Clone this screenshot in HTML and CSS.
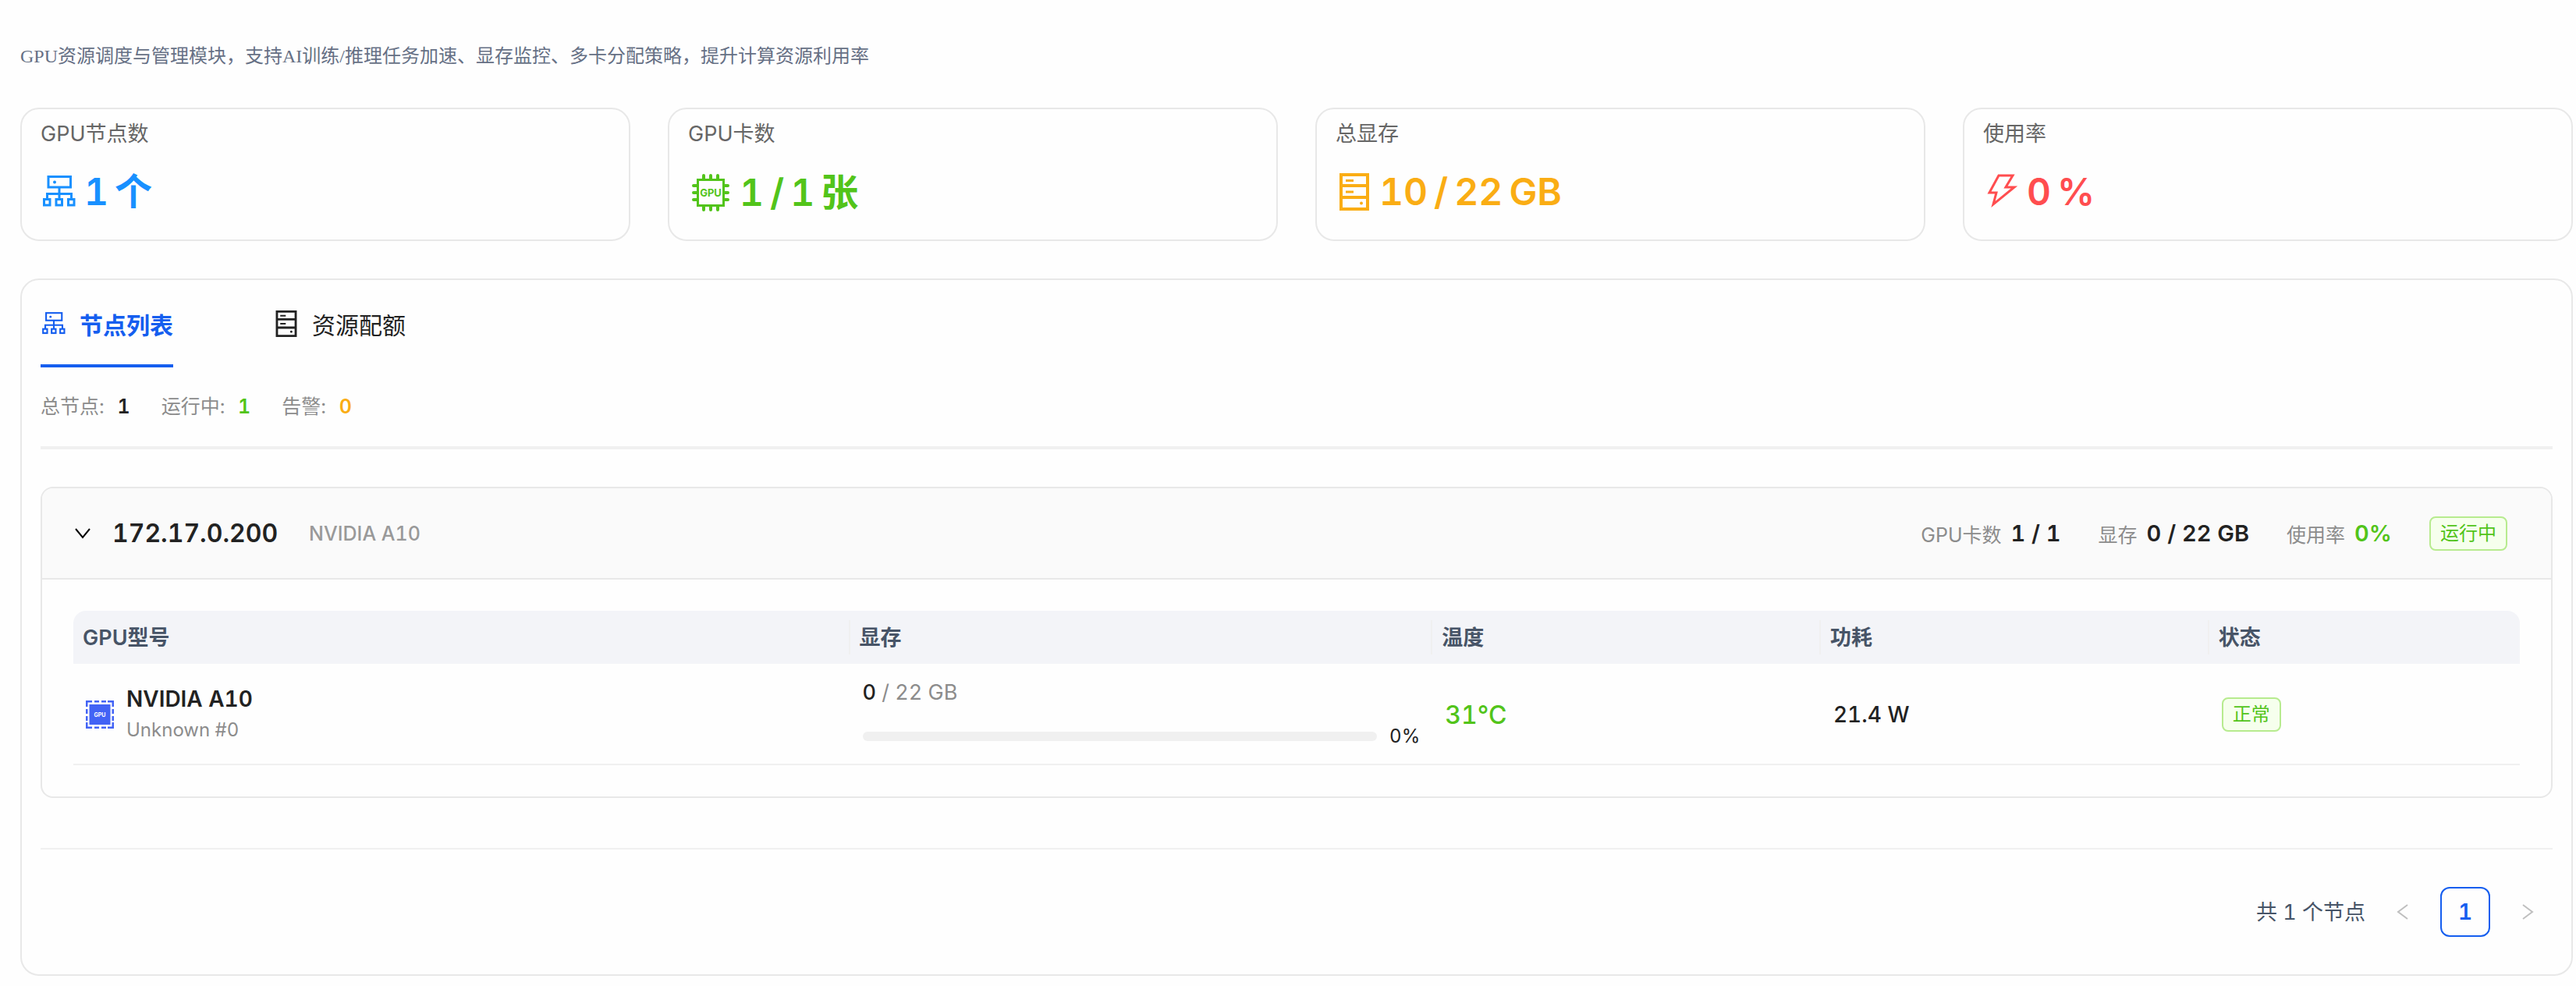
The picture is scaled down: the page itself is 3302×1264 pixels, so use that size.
FILE: index.html
```html
<!DOCTYPE html>
<html lang="zh-CN">
<head>
    <meta charset="UTF-8">
    <meta name="viewport" content="width=device-width, initial-scale=1.0">
    <title>GPU资源管理</title>
    <link rel="stylesheet" href="styles.css">
</head>
<body>

    <!-- shared icons -->
    <svg class="sprite" aria-hidden="true">
        <symbol id="icon-node" viewBox="0 0 48 48">
            <g fill="none" stroke="currentColor" stroke-width="3">
                <rect x="10" y="4.5" width="28.5" height="13.5"/>
                <path d="M24 18v15M8.5 33v-6.5h31V33"/>
                <rect x="4.5" y="33.5" width="7.5" height="7.5"/>
                <rect x="20" y="33.5" width="7.5" height="7.5"/>
                <rect x="35.5" y="33.5" width="7.5" height="7.5"/>
            </g>
            <circle cx="18" cy="11.5" r="2" fill="currentColor"/>
        </symbol>
        <symbol id="icon-server" viewBox="0 0 48 48">
            <g fill="none" stroke="currentColor">
                <path d="M7 2h34v44H7zM7 16h34M7 31h34" stroke-width="4"/>
                <path d="M13 9.5h10M13 24h10" stroke-width="3"/>
            </g>
            <circle cx="33" cy="38.5" r="2" fill="currentColor"/>
        </symbol>
    </svg>

    <p class="desc">GPU资源调度与管理模块，支持AI训练/推理任务加速、显存监控、多卡分配策略，提升计算资源利用率</p>

    <div class="cards">
        <div class="card">
            <div class="card-title">GPU节点数</div>
            <div class="card-value blue">
                <svg class="icon-lg"><use href="#icon-node"/></svg>
                <span>1</span>
                <span>个</span>
            </div>
        </div>
        <div class="card">
            <div class="card-title">GPU卡数</div>
            <div class="card-value green">
                <svg class="icon-chip" viewBox="0 0 58 58">
                    <rect x="12.5" y="12.5" width="33" height="33" fill="none" stroke="currentColor" stroke-width="3"/>
                    <path d="M20 11V7M29 11V7M38 11V7M20 47v4M29 47v4M38 47v4M11 20H7M11 29H7M11 38H7M47 20h4M47 29h4M47 38h4" stroke="currentColor" stroke-width="4" stroke-linecap="round"/>
                    <text x="29" y="34" text-anchor="middle" class="chip-text">GPU</text>
                </svg>
                <span>1</span>
                <span>/</span>
                <span>1</span>
                <span>张</span>
            </div>
        </div>
        <div class="card">
            <div class="card-title">总显存</div>
            <div class="card-value orange">
                <svg class="icon-lg"><use href="#icon-server"/></svg>
                <span>10</span>
                <span>/</span>
                <span>22</span>
                <span>GB</span>
            </div>
        </div>
        <div class="card">
            <div class="card-title">使用率</div>
            <div class="card-value red">
                <svg class="icon-lg" viewBox="0 0 48 48">
                    <path d="M20 3h18L29 18h11L13 40l4-15H8z" fill="none" stroke="currentColor" stroke-width="3"/>
                </svg>
                <span>0</span>
                <span>%</span>
            </div>
        </div>
    </div>

    <div class="panel">
        <div class="tabs">
            <button class="tab active">
                <svg class="icon-tab"><use href="#icon-node"/></svg>
                <span>节点列表</span>
            </button>
            <button class="tab">
                <svg class="icon-tab"><use href="#icon-server"/></svg>
                <span>资源配额</span>
            </button>
        </div>

        <div class="stats">
            <span>总节点: <b>1</b></span>
            <span>运行中: <b class="green">1</b></span>
            <span>告警: <b class="orange">0</b></span>
        </div>

        <div class="node">
            <div class="node-header">
                <button class="toggle" aria-label="收起">
                    <svg class="icon-sm" viewBox="0 0 24 24"><path d="M3 6l9 11 9-11" fill="none" stroke="currentColor" stroke-width="2"/></svg>
                </button>
                <span class="node-ip">172.17.0.200</span>
                <span class="node-model">NVIDIA A10</span>
                <div class="node-info">
                    <span>GPU卡数 <b>1 / 1</b></span>
                    <span>显存 <b>0 / 22 GB</b></span>
                    <span>使用率 <b class="green">0%</b></span>
                    <span class="tag">运行中</span>
                </div>
            </div>
            <div class="node-body">
                <table>
                    <colgroup>
                        <col class="col-model">
                        <col class="col-memory">
                        <col class="col-temp">
                        <col class="col-power">
                        <col class="col-status">
                    </colgroup>
                    <thead>
                        <tr>
                            <th>GPU型号</th>
                            <th>显存</th>
                            <th>温度</th>
                            <th>功耗</th>
                            <th>状态</th>
                        </tr>
                    </thead>
                    <tbody>
                        <tr>
                            <td>
                                <div class="gpu">
                                    <svg class="icon-gpu" viewBox="0 0 36 36">
                                        <path d="M1 8V1h7M11 1h6M20 1h6M28 1h7v7M35 11v6M35 20v6M35 28v7h-7M26 35h-6M17 35h-6M8 35H1v-7M1 26v-6M1 17v-6" fill="none" stroke="currentColor" stroke-width="3"/>
                                        <rect x="4.5" y="5" width="27" height="26" fill="currentColor"/>
                                        <text x="18" y="21" text-anchor="middle" class="gpu-text">GPU</text>
                                    </svg>
                                    <div>
                                        <div class="gpu-name">NVIDIA A10</div>
                                        <div class="gpu-sub">Unknown #0</div>
                                    </div>
                                </div>
                            </td>
                            <td>
                                <div class="mem"><b>0</b> / 22 GB</div>
                                <div class="progress">
                                    <div class="bar"><div class="bar-fill" style="width: 0%"></div></div>
                                    <span>0%</span>
                                </div>
                            </td>
                            <td><span class="temp green">31°C</span></td>
                            <td><span class="power">21.4 W</span></td>
                            <td><span class="tag">正常</span></td>
                        </tr>
                    </tbody>
                </table>
            </div>
        </div>

        <div class="pagination">
            <span class="total">共 1 个节点</span>
            <button disabled aria-label="上一页">
                <svg class="icon-sm" viewBox="0 0 24 24"><path d="M18 3L6 12l12 9" fill="none" stroke="currentColor" stroke-width="2"/></svg>
            </button>
            <button class="current">1</button>
            <button disabled aria-label="下一页">
                <svg class="icon-sm" viewBox="0 0 24 24"><path d="M6 3l12 9-12 9" fill="none" stroke="currentColor" stroke-width="2"/></svg>
            </button>
        </div>
    </div>

</body>
</html>
```

FILE: styles.css
```css
* { box-sizing: border-box; }
body { margin: 0; padding: 54px 4px 12px 26px; font-family: Inter, "Noto Sans CJK SC", sans-serif; font-size: 24px; font-variant-numeric: tabular-nums; color: #222; background: #fefefe; }
button { font-family: inherit; font-variant-numeric: inherit; background: none; border: none; padding: 0; cursor: pointer; }
svg { display: block; flex: none; }
.sprite { display: none; }

.blue { color: #1890ff; }
.green { color: #52c41a; }
.orange { color: #faad14; }
.red { color: #ff4d4f; }

.desc { margin: 0 0 48px; font-family: "Liberation Serif", "Noto Sans CJK SC", serif; font-size: 24px; line-height: 36px; color: #667085; }

/* summary cards */
.cards { display: grid; grid-template-columns: repeat(4, 1fr); gap: 48px; margin-bottom: 48px; }
.card { height: 171px; padding: 12px 24px; border: 2px solid #e8e8e8; border-radius: 24px; }
.card-title { font-size: 27px; line-height: 40px; color: #666; }
.card-value { display: flex; align-items: center; gap: 8px; margin-top: 26px; font-size: 48px; font-weight: 600; line-height: 56px; }
.icon-lg { width: 48px; height: 48px; }
.icon-chip { width: 58px; height: 58px; }
.chip-text { font-size: 13px; font-weight: 700; fill: currentColor; }

/* main panel */
.panel { padding: 20px 24px 48px; border: 2px solid #e8e8e8; border-radius: 24px; }
.tabs { display: flex; gap: 128px; }
.tab { display: flex; align-items: center; gap: 16px; height: 92px; padding-bottom: 16px; border-bottom: 4px solid transparent; font-size: 30px; color: #222; }
.tab.active { color: #155eef; border-color: #155eef; font-weight: 600; }
.icon-tab { width: 34px; height: 34px; }
.stats { display: flex; gap: 40px; padding: 32px 0 33px; border-bottom: 4px solid #f0f0f0; font-size: 25px; line-height: 36px; color: #8c8c8c; }
.stats b { margin-left: 10px; font-weight: 600; }
.stats b:not([class]) { color: #222; }

/* node */
.node { margin-top: 48px; border: 2px solid #e8e8e8; border-radius: 16px; overflow: hidden; }
.node-header { display: flex; align-items: center; height: 117px; padding: 0 56px 0 40px; background: #fafafa; border-bottom: 2px solid #e8e8e8; }
.icon-sm { width: 24px; height: 24px; }
.node-ip { margin-left: 26px; font-size: 32px; font-weight: 600; }
.node-model { margin-left: 40px; font-size: 25px; font-weight: 500; color: #999; }
.node-info { display: flex; align-items: center; gap: 48px; margin-left: auto; font-size: 25px; color: #8c8c8c; }
.node-info > span { display: flex; align-items: center; gap: 12px; }
.node-info b { font-size: 29px; font-weight: 600; }
.node-info b:not([class]) { color: #222; }
.tag { display: inline-block; padding: 0 12px; border: 2px solid #b7eb8f; border-radius: 8px; background: #f6ffed; font-size: 24px; line-height: 40px; color: #52c41a; }
.node-body { padding: 40px; }

table { width: 100%; table-layout: fixed; border-collapse: separate; border-spacing: 0; }
th { position: relative; height: 68px; padding: 0 12px 4px; text-align: left; background: #f3f4f8; font-size: 27px; font-weight: 600; color: #475467; }
th:first-child { border-top-left-radius: 16px; }
th:last-child { border-top-right-radius: 16px; }
th:not(:last-child)::after { content: ""; position: absolute; top: 12px; bottom: 12px; right: 0; width: 2px; background: #f0f0f0; }
td { height: 130px; padding: 2px 16px 0; border-bottom: 2px solid #f0f0f0; vertical-align: middle; }
.col-model { width: 400px; }
.col-memory { width: 300px; }
.col-temp, .col-power { width: 200px; }
.col-status { width: 160px; }
.gpu { display: flex; align-items: center; gap: 16px; }
.icon-gpu { width: 36px; height: 36px; color: #4263f5; }
.gpu-text { font-size: 7px; font-weight: 700; fill: #fff; }
.gpu-name { font-size: 28px; font-weight: 600; line-height: 40px; }
.gpu-sub { line-height: 40px; color: #8c8c8c; }
.mem { font-size: 27px; line-height: 40px; color: #8c8c8c; }
.mem b { font-weight: 500; color: #222; }
.progress { display: flex; align-items: center; gap: 16px; margin-top: 16px; line-height: 40px; }
.bar { flex: 1; height: 12px; border-radius: 6px; background: #f0f0f0; }
.bar-fill { height: 12px; border-radius: 6px; background: #52c41a; }
.temp { font-size: 32px; font-weight: 500; }
.power { font-size: 28px; font-weight: 500; }

.pagination { display: flex; align-items: center; justify-content: flex-end; gap: 16px; margin-top: 64px; padding-top: 48px; border-top: 2px solid #f0f0f0; }
.pagination button { display: flex; align-items: center; justify-content: center; width: 64px; height: 64px; border-radius: 12px; font-size: 28px; color: #bfbfbf; }
.pagination .current { border: 2px solid #155eef; font-weight: 600; color: #155eef; }
.total { padding-bottom: 4px; font-size: 27px; color: #475467; }
```
